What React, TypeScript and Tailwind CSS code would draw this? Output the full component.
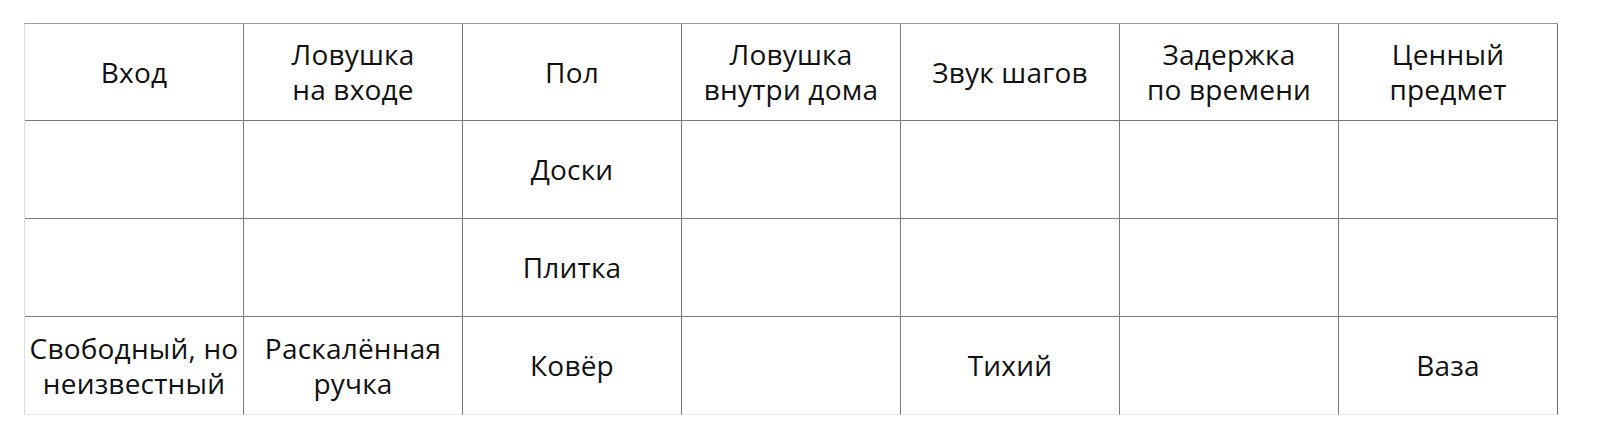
const header = [
  ["Вход"],
  ["Ловушка", "на входе"],
  ["Пол"],
  ["Ловушка", "внутри дома"],
  ["Звук шагов"],
  ["Задержка", "по времени"],
  ["Ценный", "предмет"],
];

const rows: string[][][] = [
  [[], [], ["Доски"], [], [], [], []],
  [[], [], ["Плитка"], [], [], [], []],
  [["Свободный, но", "неизвестный"], ["Раскалённая", "ручка"], ["Ковёр"], [], ["Тихий"], [], ["Ваза"]],
];

const Cell = ({ lines, row, col }: { lines: string[]; row: number; col: number }) => {
  const last = row === rows.length;
  return (
    <div
      className={`flex flex-col items-center justify-center border-r px-1 text-center ${
        row === 0 ? "h-[97px]" : "h-[98px]"
      } ${last ? "border-b border-b-[#ececec]" : "border-b border-b-[#7a7a7a]"} ${
        col === 6 ? "border-r-[#6e6e6e]" : "border-r-[#7a7a7a]"
      }`}
    >
      {lines.map((l) => (
        <span key={l} className="block whitespace-nowrap">
          {l}
        </span>
      ))}
    </div>
  );
};

export default function App() {
  return (
    <div className="h-[440px] w-[1600px] bg-white pl-[24px] pt-[23px]">
      <div
        className="grid w-max grid-cols-[repeat(7,219px)] border-l border-t border-l-[#dcdcdc] border-t-[#9a9a9a] text-[28px] leading-[35px] tracking-[0.2px] text-[#111]"
        style={{ fontFamily: '"Open Sans", "Noto Sans", sans-serif' }}
      >
        {header.map((h, i) => (
          <Cell key={`h${i}`} lines={h} row={0} col={i} />
        ))}
        {rows.map((r, ri) =>
          r.map((c, ci) => <Cell key={`${ri}-${ci}`} lines={c} row={ri + 1} col={ci} />)
        )}
      </div>
    </div>
  );
}
